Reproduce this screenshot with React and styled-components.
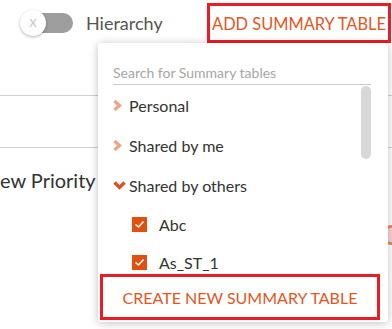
import React from 'react'
import styled, { createGlobalStyle } from 'styled-components'

const Global = createGlobalStyle`
body{
  margin:0;
  font-family: Lato, "Open Sans", Arial, sans-serif;
  background:#fff;
  overflow:hidden;
}
`
const Page = styled.div`
width:392px;
height:329px;
position:relative;
overflow:hidden;
`
const Header = styled.div`
display:flex;
align-items:center;
height:45px;
padding-left:21px;
`
const Track = styled.div`
position:relative;
width:52px;
height:20px;
border-radius:10px;
background:#9e9e9e;
display:flex;
align-items:center;
`
const Knob = styled.div`
width:26px;
height:26px;
margin-left:-1px;
border-radius:50%;
background:#fff;
box-shadow:0 1px 3px rgba(0,0,0,0.3);
display:flex;
align-items:center;
justify-content:center;
color:#c9c9c9;
font-size:15px;
line-height:1;
padding-bottom:2px;
box-sizing:border-box;
`
const Label = styled.span`
margin-left:13px;
font-size:18px;
color:#555;
`
const RedBox = styled.button`
border:3px solid #ec1c24;
background:#fff;
color:#e4561c;
font-family:inherit;
font-size:${(p) => p.size || 16}px;
text-transform:uppercase;
display:flex;
align-items:center;
justify-content:center;
padding:0;
cursor:pointer;
`
const AddButton = styled(RedBox)`
margin-left:auto;
margin-right:1px;
width:184px;
height:40px;
margin-top:1px;
`
const Section = styled.div`
height:${(p) => p.h}px;
border-bottom:${(p) => (p.line ? '1px solid #cfcfcf' : 'none')};
`
const PriorityText = styled.div`
margin-left:-15px;
padding-top:20px;
font-size:20px;
color:#333;
`
const Marker = styled.div`
position:absolute;
left:381px;
top:225px;
width:14px;
height:14px;
border-radius:50%;
border:3px solid #e88a60;
background:#f6d6cf;
`
const Panel = styled.div`
position:absolute;
left:98px;
top:43px;
width:290px;
height:279px;
background:#fff;
border-radius:3px;
box-shadow:0 1px 8px rgba(0,0,0,0.25);
display:flex;
flex-direction:column;
z-index:2;
`
const Search = styled.input`
margin:17px 17px 0 15px;
height:24px;
border:none;
border-bottom:1px solid #cccccc;
font-family:inherit;
font-size:14px;
padding:0;
outline:none;
color:#333;
&::placeholder{ color:#a6a6a6; }
`
const List = styled.div`
position:relative;
flex:1;
overflow:hidden;
`
const Thumb = styled.div`
position:absolute;
right:17px;
top:1px;
width:10px;
height:73px;
border-radius:5px;
background:#d8d8d8;
`
const Row = styled.div`
display:flex;
align-items:center;
height:${(p) => (p.child ? 38 : 40)}px;
padding-left:${(p) => (p.child ? 34 : 15)}px;
font-size:16px;
color:#333;
`
const Arrow = styled.span`
width:16px;
display:flex;
align-items:center;
`
const Box = styled.span`
width:15px;
height:15px;
background:#e2500f;
display:flex;
align-items:center;
justify-content:center;
margin-right:12px;
`
const CreateButton = styled(RedBox)`
margin:0 8px 2px 2px;
height:46px;
flex-shrink:0;
`

const Chevron = ({ open }) =>
  open ? (
    <svg width="13" height="9" viewBox="0 0 13 9">
      <polyline points="1.5,1.5 6.5,6.5 11.5,1.5" fill="none" stroke="#e2501a" strokeWidth="3.2" />
    </svg>
  ) : (
    <svg width="9" height="11" viewBox="0 0 9 11">
      <polyline points="1.5,1 6.5,5.5 1.5,10" fill="none" stroke="#f2a27e" strokeWidth="3.2" />
    </svg>
  )

const Check = () => (
  <svg width="11" height="9" viewBox="0 0 11 9">
    <polyline points="1.5,4.5 4.5,7 9.5,1.5" fill="none" stroke="#fff" strokeWidth="1.6" />
  </svg>
)

const groups = [
  { name: 'Personal' },
  { name: 'Shared by me' },
  { name: 'Shared by others', open: true, items: ['Abc', 'As_ST_1'] },
]

export default function App() {
  return (
    <Page>
      <Global />
      <Header>
        <Track>
          <Knob>x</Knob>
        </Track>
        <Label>Hierarchy</Label>
        <AddButton size={16.4}>Add Summary Table</AddButton>
      </Header>
      <Section h={50} line />
      <Section h={51} line />
      <Section h={120}>
        <PriorityText>New Priority</PriorityText>
      </Section>
      <Marker />
      <Panel>
        <Search placeholder="Search for Summary tables" />
        <List>
          <Thumb />
          {groups.map((g) => (
            <React.Fragment key={g.name}>
              <Row>
                <Arrow>
                  <Chevron open={g.open} />
                </Arrow>
                {g.name}
              </Row>
              {g.open &&
                g.items.map((it) => (
                  <Row child key={it}>
                    <Box>
                      <Check />
                    </Box>
                    {it}
                  </Row>
                ))}
            </React.Fragment>
          ))}
        </List>
        <CreateButton>Create New Summary Table</CreateButton>
      </Panel>
    </Page>
  )
}
